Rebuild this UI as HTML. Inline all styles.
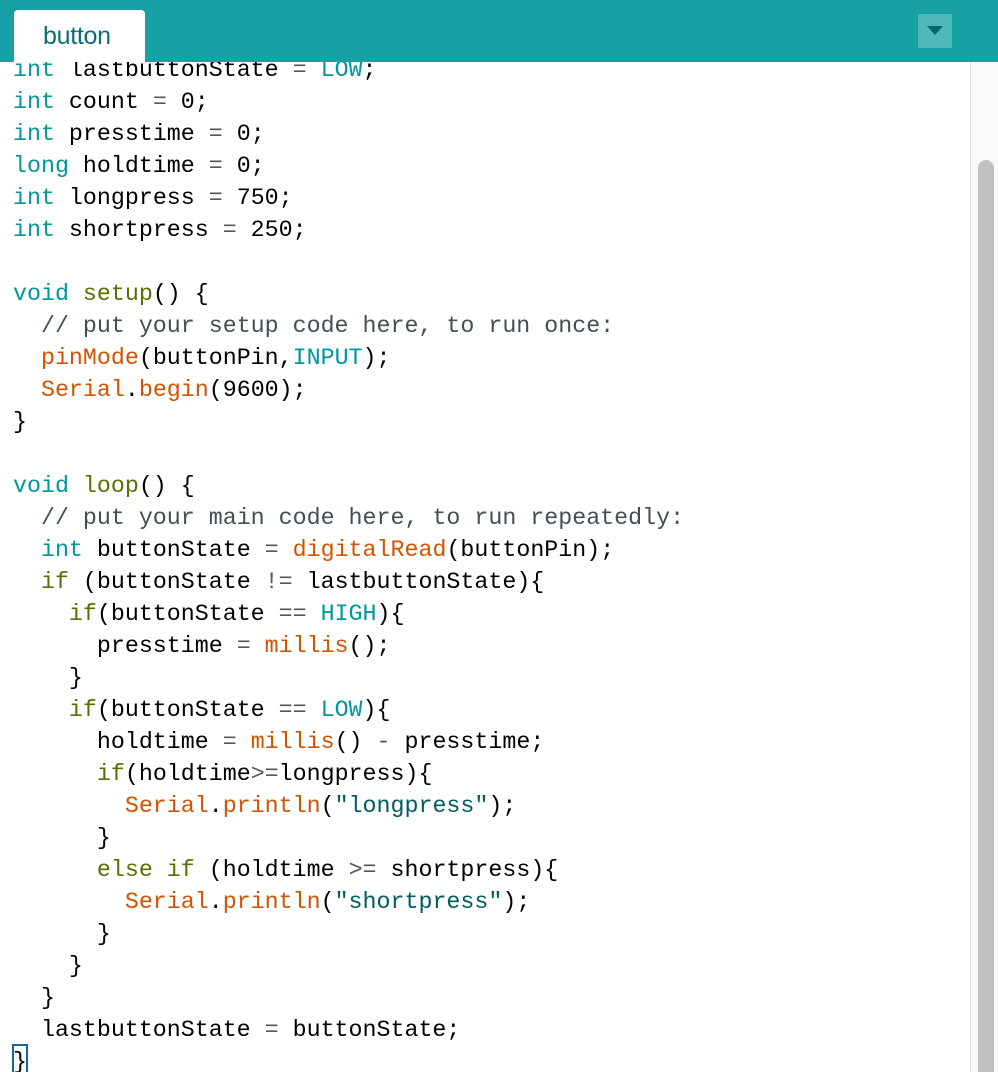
<!DOCTYPE html>
<html><head><meta charset="utf-8"><style>
html,body{margin:0;padding:0;width:998px;height:1072px;overflow:hidden;background:#fff;position:relative}
#hdr{position:absolute;left:0;top:0;width:998px;height:62px;background:#17a1a5;z-index:2}
#tab{position:absolute;left:14px;top:10px;width:131px;height:52px;background:#fff;border-radius:4px 4px 0 0}
#tab span{position:absolute;left:29px;top:12px;font:25px "Liberation Sans",sans-serif;color:#0b7075;letter-spacing:-0.3px}
#dd{position:absolute;left:918px;top:14px;width:34px;height:34px;background:#4eb8bb}
#dd:after{content:"";position:absolute;left:9px;top:12px;border-left:8px solid transparent;border-right:8px solid transparent;border-top:9px solid #00676b}
#sb{position:absolute;left:970px;top:62px;width:28px;height:1010px;background:#f9f9f9;border-left:1px solid #e2e2e2}
#th{position:absolute;left:978px;top:160px;width:16px;height:920px;background:#c1c1c1;border-radius:8px}
pre{position:absolute;left:13px;top:54px;margin:0;font:23.3px/32px "Liberation Mono",monospace;color:#000}
.k{color:#00979c}.o{color:#5e6d03}.f{color:#d35400}.c{color:#434f54}.s{color:#005c5f}.p{color:#555}
#br{position:absolute;left:12px;top:1044px;width:12px;height:28px;border:2px solid #1366a0;box-sizing:content-box}
</style></head><body>
<div id="hdr"><div id="tab"><span>button</span></div><div id="dd"></div></div>
<div id="sb"></div><div id="th"></div>
<pre><span class="k">int</span> lastbuttonState <span class="p">=</span> <span class="k">LOW</span>;
<span class="k">int</span> count <span class="p">=</span> 0;
<span class="k">int</span> presstime <span class="p">=</span> 0;
<span class="k">long</span> holdtime <span class="p">=</span> 0;
<span class="k">int</span> longpress <span class="p">=</span> 750;
<span class="k">int</span> shortpress <span class="p">=</span> 250;

<span class="k">void</span> <span class="o">setup</span>() {
  <span class="c">// put your setup code here, to run once:</span>
  <span class="f">pinMode</span>(buttonPin,<span class="k">INPUT</span>);
  <span class="f">Serial</span>.<span class="f">begin</span>(9600);
}

<span class="k">void</span> <span class="o">loop</span>() {
  <span class="c">// put your main code here, to run repeatedly:</span>
  <span class="k">int</span> buttonState <span class="p">=</span> <span class="f">digitalRead</span>(buttonPin);
  <span class="o">if</span> (buttonState <span class="p">!=</span> lastbuttonState){
    <span class="o">if</span>(buttonState <span class="p">==</span> <span class="k">HIGH</span>){
      presstime <span class="p">=</span> <span class="f">millis</span>();
    }
    <span class="o">if</span>(buttonState <span class="p">==</span> <span class="k">LOW</span>){
      holdtime <span class="p">=</span> <span class="f">millis</span>() <span class="p">-</span> presstime;
      <span class="o">if</span>(holdtime<span class="p">&gt;=</span>longpress){
        <span class="f">Serial</span>.<span class="f">println</span>(<span class="s">"longpress"</span>);
      }
      <span class="o">else</span> <span class="o">if</span> (holdtime <span class="p">&gt;=</span> shortpress){
        <span class="f">Serial</span>.<span class="f">println</span>(<span class="s">"shortpress"</span>);
      }
    }
  }
  lastbuttonState <span class="p">=</span> buttonState;
}</pre>
<div id="br"></div>
</body></html>
